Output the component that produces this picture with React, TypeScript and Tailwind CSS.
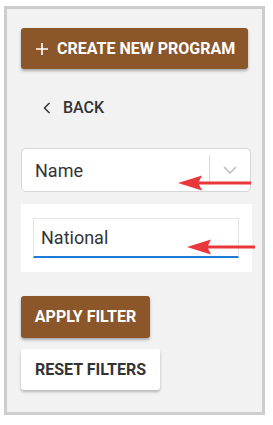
const font = { fontFamily: "Roboto, 'Liberation Sans', sans-serif" };

const Arrow = ({ y, tipX, endX }: { y: number; tipX: number; endX: number }) => {
  const w = endX - tipX;
  return (
    <svg
      className="absolute pointer-events-none"
      style={{ left: tipX, top: y - 9 }}
      width={w}
      height={18}
      viewBox={`0 0 ${w} 18`}
    >
      <path d={`M0 9 L24 1.5 L21 7.5 L${w} 7.5 L${w} 10.5 L21 10.5 L24 16.5 Z`} fill="#e8383b" />
    </svg>
  );
};

const App = () => {
  return (
    <div className="relative w-[273px] h-[425px] bg-white pt-[6px] pl-[4px]" style={font}>
      <div className="flex flex-col items-start w-[261px] h-[409px] border-[3px] border-[#cdcdcd] bg-[#f2f2f2] pl-[14px] pt-[19px]">
        <button className="flex items-center gap-[9px] w-[227px] h-[41px] bg-[#8b572a] rounded-[3px] shadow-[0_2px_3px_rgba(0,0,0,0.3)] pl-[15px] text-white text-[16px] font-bold">
          <svg width="12" height="12" viewBox="0 0 12 12">
            <path d="M6 0V12M0 6H12" stroke="white" strokeWidth="1.6" />
          </svg>
          CREATE NEW PROGRAM
        </button>

        <div className="flex items-center gap-[12px] h-[20px] mt-[29px] pl-[22px] text-[16px] font-medium text-[#333]">
          <svg width="8" height="12" viewBox="0 0 8 12">
            <path d="M6.5 1L1.5 6L6.5 11" stroke="#333" strokeWidth="1.5" fill="none" />
          </svg>
          BACK
        </div>

        <div className="flex items-center mt-[30px] w-[230px] h-[44px] bg-white border border-[#d6d6d6] rounded-[5px]">
          <span className="flex-1 pl-[13px] text-[18px] text-[#333]">Name</span>
          <div className="w-px h-[30px] bg-[#d9d9d9]" />
          <div className="w-[40px] flex justify-center">
            <svg width="14" height="8" viewBox="0 0 14 8">
              <path d="M1 1L7 7L13 1" stroke="#bdbdbd" strokeWidth="1.5" fill="none" />
            </svg>
          </div>
        </div>

        <div className="mt-[12px] w-[231px] h-[68px] bg-white pl-[12px] pt-[14px]">
          <div className="w-[206px] h-[40px] border border-[#e3e3e3] border-b-[2px] border-b-[#1f7ad6] flex items-center pl-[7px] text-[18px] text-[#333]">
            National
          </div>
        </div>

        <button className="mt-[24px] w-[129px] h-[42px] bg-[#8b572a] rounded-[3px] shadow-[0_2px_3px_rgba(0,0,0,0.3)] text-white text-[16px] font-bold">
          APPLY FILTER
        </button>
        <button className="mt-[11px] w-[139px] h-[41px] bg-white rounded-[3px] shadow-[0_2px_3px_rgba(0,0,0,0.25)] text-[#333] text-[16px] font-bold">
          RESET FILTERS
        </button>
      </div>

      <Arrow y={183} tipX={178} endX={251} />
      <Arrow y={247} tipX={187} endX={255} />
    </div>
  );
};

export default App;
